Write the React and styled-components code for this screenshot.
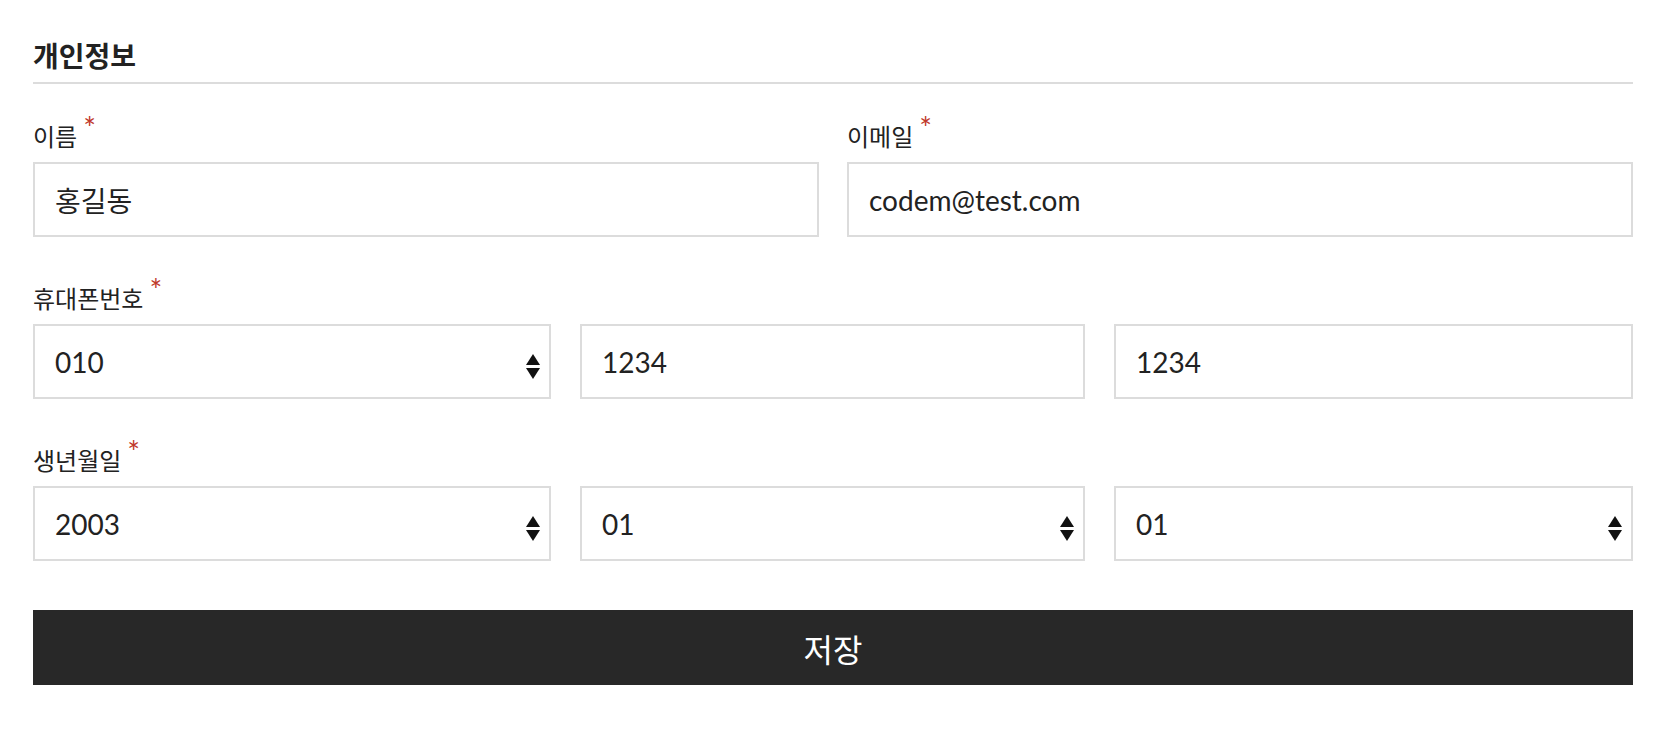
import React from 'react';
import styled, { createGlobalStyle } from 'styled-components';

const GlobalStyle = createGlobalStyle`
  html, body {
    margin: 0;
    padding: 0;
    background: #fff;
  }
  body {
    font-family: Lato, "Noto Sans CJK KR", sans-serif;
    color: #222;
  }
  * {
    box-sizing: border-box;
  }
`;

const years = ['2001', '2002', '2003', '2004', '2005'];
const months = ['01', '02', '03', '04', '05', '06', '07', '08', '09', '10', '11', '12'];
const days = ['01', '02', '03', '04', '05', '06', '07', '08', '09', '10'];

const App = () => (
  <Page>
    <GlobalStyle />
    <Form onSubmit={e => e.preventDefault()}>
      <Title>개인정보</Title>

      <Fields>
        <Row cols="1fr 1fr" gap={28}>
          <Field>
            <Label>이름<Required>*</Required></Label>
            <TextInput defaultValue="홍길동" />
          </Field>
          <Field>
            <Label>이메일<Required>*</Required></Label>
            <TextInput defaultValue="codem@test.com" />
          </Field>
        </Row>

        <Field>
          <Label>휴대폰번호<Required>*</Required></Label>
          <Row cols="518fr 505fr 519fr" gap={29}>
            <Select defaultValue="010" options={['010', '011', '016', '017', '019']} />
            <TextInput defaultValue="1234" />
            <TextInput defaultValue="1234" />
          </Row>
        </Field>

        <Field>
          <Label>생년월일<Required>*</Required></Label>
          <Row cols="518fr 505fr 519fr" gap={29}>
            <Select defaultValue="2003" options={years} />
            <Select defaultValue="01" options={months} />
            <Select defaultValue="01" options={days} />
          </Row>
        </Field>
      </Fields>

      <SaveButton type="submit">저장</SaveButton>
    </Form>
  </Page>
);

// 기본 select 화살표 대신 위/아래 삼각형
const Select = ({ options, defaultValue }) => (
  <SelectWrap>
    <SelectBox defaultValue={defaultValue}>
      {options.map(o => (
        <option key={o} value={o}>{o}</option>
      ))}
    </SelectBox>
    <Arrows width="14" height="25" viewBox="0 0 14 25">
      <path d="M7 0 L14 11 L0 11 Z" fill="#111" />
      <path d="M0 14 L14 14 L7 25 Z" fill="#111" />
    </Arrows>
  </SelectWrap>
);

const Page = styled.div`
  padding: 38px 0 60px 33px;
`;

const Form = styled.form`
  width: 1600px;
  display: flex;
  flex-direction: column;
`;

const Title = styled.h2`
  margin: 0 0 38px;
  padding-bottom: 8px;
  border-bottom: 2px solid #dcdcdc;
  font-size: 28px;
  line-height: 36px;
  font-weight: 700;
  color: #222;
`;

const Fields = styled.div`
  display: flex;
  flex-direction: column;
  gap: 47px;
`;

const Row = styled.div`
  display: grid;
  grid-template-columns: ${p => p.cols};
  column-gap: ${p => p.gap}px;
`;

const Field = styled.div`
  display: flex;
  flex-direction: column;
  min-width: 0;
`;

const Label = styled.label`
  display: block;
  height: 30px;
  margin-bottom: 10px;
  font-size: 24px;
  line-height: 30px;
  color: #222;
`;

const Required = styled.span`
  margin-left: 6px;
  font-size: 30px;
  line-height: 0;
  color: #c0392b;
  vertical-align: 7px;
`;

const fieldBox = `
  width: 100%;
  height: 75px;
  border: 2px solid #dcdcdc;
  border-radius: 0;
  background: #fff;
  font-family: Lato, "Noto Sans CJK KR", sans-serif;
  font-size: 28px;
  color: #222;
  outline: none;
`;

const TextInput = styled.input`
  ${fieldBox}
  min-width: 0;
  padding: 0 20px;
`;

const SelectWrap = styled.div`
  position: relative;
  min-width: 0;
`;

const SelectBox = styled.select`
  ${fieldBox}
  appearance: none;
  -webkit-appearance: none;
  padding: 0 44px 0 20px;
`;

const Arrows = styled.svg`
  position: absolute;
  right: 11px;
  top: calc(50% - 8px);
  pointer-events: none;
`;

const SaveButton = styled.button`
  margin-top: 49px;
  height: 75px;
  border: none;
  background: #282828;
  color: #fff;
  font-family: Lato, "Noto Sans CJK KR", sans-serif;
  font-size: 32px;
  cursor: pointer;
`;

export default App;
